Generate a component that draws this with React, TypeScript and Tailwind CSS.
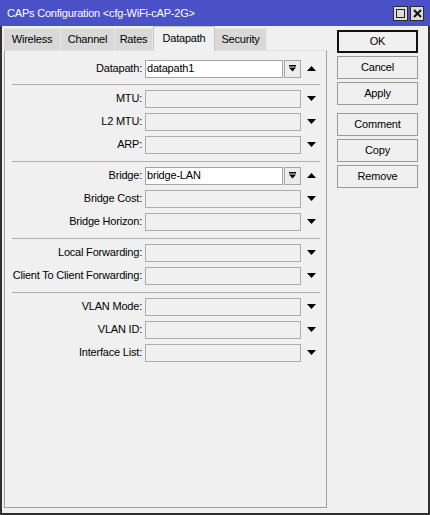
import React from "react";

function Down() {
  return (
    <svg width="9" height="5" viewBox="0 0 9 5">
      <polygon points="0,0 9,0 4.5,5" fill="#000" />
    </svg>
  );
}

function Up() {
  return (
    <svg width="9" height="5" viewBox="0 0 9 5">
      <polygon points="0,5 9,5 4.5,0" fill="#000" />
    </svg>
  );
}

function DropIcon() {
  return (
    <svg width="7" height="7" viewBox="0 0 7 7">
      <rect x="0" y="0" width="7" height="1.5" fill="#000" />
      <polygon points="0,2.5 7,2.5 3.5,6.5" fill="#000" />
    </svg>
  );
}

function EmptyRow({ label }: { label: string }) {
  return (
    <div className="flex items-center h-[23px]">
      <div className="w-[137px] text-right whitespace-nowrap">{label}</div>
      <div className="ml-[3px] w-[156px] h-[18px] border border-[#adadad] bg-[#f0f0f0]" />
      <div className="w-[20px] flex justify-center">
        <Down />
      </div>
    </div>
  );
}

function ValueRow({ label, value }: { label: string; value: string }) {
  return (
    <div className="flex items-center h-[23px]">
      <div className="w-[137px] text-right whitespace-nowrap">{label}</div>
      <div className="ml-[3px] w-[138px] h-[18px] border border-[#a5a5a5] bg-white flex items-center pl-[1px] leading-none">
        {value}
      </div>
      <div className="ml-px w-[17px] h-[18px] border border-[#a5a5a5] bg-[#ececec] flex items-center justify-center">
        <DropIcon />
      </div>
      <div className="w-[20px] flex justify-center">
        <Up />
      </div>
    </div>
  );
}

function Sep() {
  return <div className="ml-[7px] mr-[6px] h-px bg-[#b0b0b0]" />;
}

function Btn({ label, primary }: { label: string; primary?: boolean }) {
  return (
    <div
      className={
        "w-[81px] h-[23px] flex items-center justify-center bg-[#f0f0f0] " +
        (primary ? "border-2 border-[#111]" : "border border-[#9a9a9a]")
      }
    >
      {label}
    </div>
  );
}

export default function App() {
  const tabs = [
    { n: "Wireless", w: "w-[57px]" },
    { n: "Channel", w: "w-[54px]" },
    { n: "Rates", w: "w-[38px]" },
    { n: "Datapath", w: "w-[62px]", a: true },
    { n: "Security", w: "w-[52px]" },
  ];
  return (
    <div className="w-[430px] h-[515px] flex flex-col bg-[#f0f0f0] text-[11px] tracking-[-0.2px] text-black font-['Liberation_Sans',Arial,sans-serif]">
      <div className="h-[26px] bg-[#4a50c6] flex items-center pl-[7px] pr-[6px]">
        <div className="text-white text-[11px]">CAPs Configuration &lt;cfg-WiFi-cAP-2G&gt;</div>
        <div className="ml-auto flex gap-[2px] mt-[1px]">
          <div className="w-[15px] h-[15px] bg-[#dcdcdc] border border-[#2a2a2a] flex items-center justify-center">
            <div className="w-[9px] h-[9px] border-[1.5px] border-[#222]" />
          </div>
          <div className="w-[14px] h-[15px] bg-[#dcdcdc] border border-[#2a2a2a] flex items-center justify-center">
            <svg width="9" height="9" viewBox="0 0 9 9">
              <path d="M1 1 L8 8 M8 1 L1 8" stroke="#111" strokeWidth="2" />
            </svg>
          </div>
        </div>
      </div>
      <div className="flex-1 flex border-x-2 border-b-2 border-[#2f2f2f]">
        <div className="ml-[2px] w-[323px] flex flex-col pb-[5px]">
          <div className="h-[24px] flex items-end">
            {tabs.map((t) =>
              t.a ? (
                <div
                  key={t.n}
                  className={t.w + " h-[25px] -mb-px relative z-10 bg-[#f0f0f0] border-x border-t border-[#c8c8c8] flex items-center justify-center pb-[2px]"}
                >
                  {t.n}
                </div>
              ) : (
                <div
                  key={t.n}
                  className={t.w + " h-[22px] bg-[#d9d9d9] border-r border-t border-[#e6e6e6] flex items-center justify-center"}
                >
                  {t.n}
                </div>
              )
            )}
          </div>
          <div className="flex-1 border-t border-t-[#e0e0e0] border-l border-r border-b border-[#a0a0a0] bg-[#f0f0f0]">
            <div className="pt-[6px] pb-[4px]">
              <ValueRow label="Datapath:" value="datapath1" />
            </div>
            <Sep />
            <div className="pt-[2px] pb-[5px]">
              <EmptyRow label="MTU:" />
              <EmptyRow label="L2 MTU:" />
              <EmptyRow label="ARP:" />
            </div>
            <Sep />
            <div className="pt-[2px] pb-[5px]">
              <ValueRow label="Bridge:" value="bridge-LAN" />
              <EmptyRow label="Bridge Cost:" />
              <EmptyRow label="Bridge Horizon:" />
            </div>
            <Sep />
            <div className="pt-[2px] pb-[5px]">
              <EmptyRow label="Local Forwarding:" />
              <EmptyRow label="Client To Client Forwarding:" />
            </div>
            <Sep />
            <div className="pt-[2px] pb-[5px]">
              <EmptyRow label="VLAN Mode:" />
              <EmptyRow label="VLAN ID:" />
              <EmptyRow label="Interface List:" />
            </div>
          </div>
        </div>
        <div className="ml-[10px] pt-[4px] flex flex-col">
          <Btn label="OK" primary />
          <div className="h-[3px]" />
          <Btn label="Cancel" />
          <div className="h-[3px]" />
          <Btn label="Apply" />
          <div className="h-[8px]" />
          <Btn label="Comment" />
          <div className="h-[3px]" />
          <Btn label="Copy" />
          <div className="h-[3px]" />
          <Btn label="Remove" />
        </div>
      </div>
    </div>
  );
}
